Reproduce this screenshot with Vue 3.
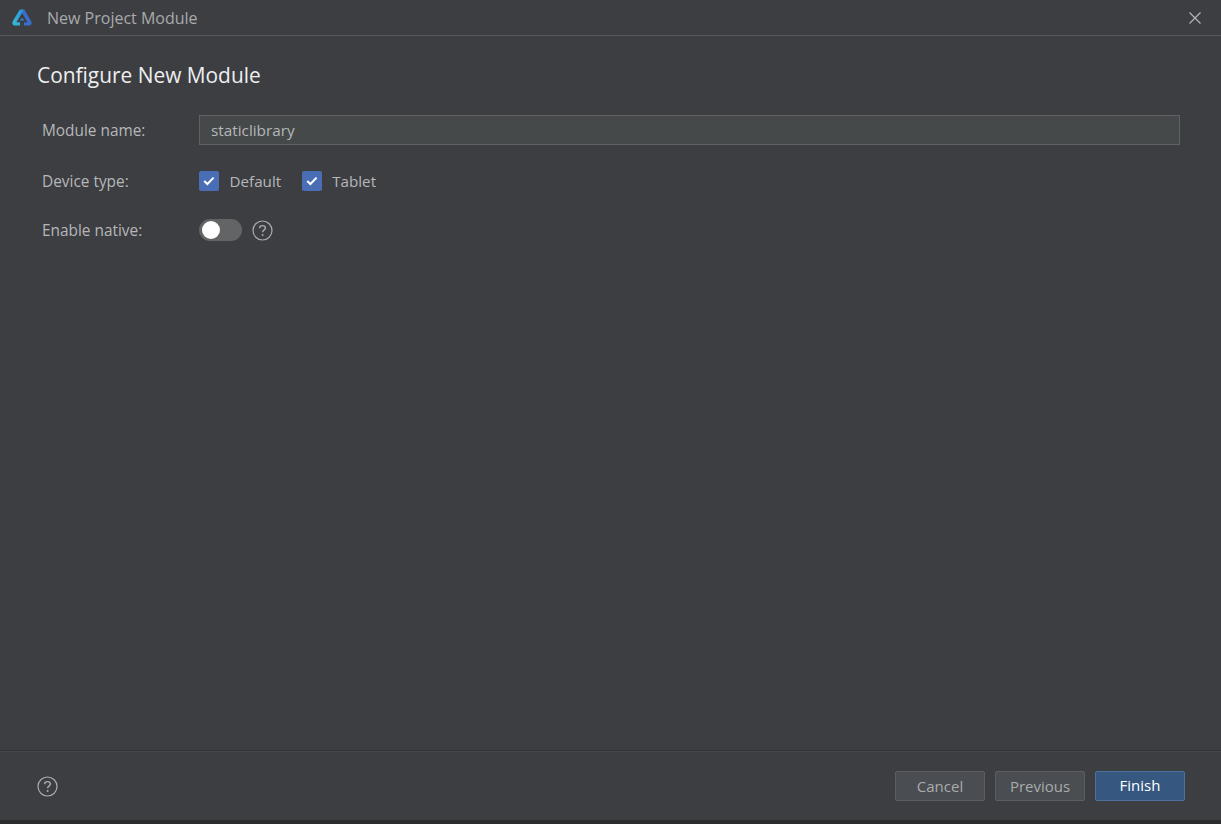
<template>
  <div class="dialog">
    <div class="title-bar">
      <svg class="logo" width="20" height="17" viewBox="0 0 20 17">
        <defs>
          <linearGradient id="logoLeft" x1="0" y1="1" x2="1" y2="0">
            <stop offset="0" stop-color="#38bcd6" />
            <stop offset="1" stop-color="#2a92dc" />
          </linearGradient>
        </defs>
        <path d="M9 0.5H11.2C12 0.5 12.6 0.9 13 1.5L19.3 12.6C20.3 14.4 19.2 16.5 17.2 16.5H12V13.2H15.6L10 4L9 0.5Z" fill="#3a6ccc" />
        <path d="M9.2 0.5C8.2 0.5 7.5 0.9 7 1.7L0.7 12.6C-0.3 14.4 0.8 16.5 2.8 16.5H8V13.2H4.4L10 4L11.4 0.5H9.2Z" fill="url(#logoLeft)" />
        <path d="M10 9L12.4 11.6H7.6L10 9Z" fill="#2f86d8" />
      </svg>
      <span class="title">New Project Module</span>
      <svg class="close" width="14" height="14" viewBox="0 0 14 14">
        <path d="M1.5 1.5L12.5 12.5M12.5 1.5L1.5 12.5" stroke="#b4b6b8" stroke-width="1.2" fill="none" />
      </svg>
    </div>

    <div class="body">
      <h1 class="heading">Configure New Module</h1>
      <div class="form">
        <div class="row">
          <label class="label">Module name:</label>
          <div class="input">staticlibrary</div>
        </div>
        <div class="row device-row">
          <label class="label">Device type:</label>
          <div class="checks">
            <div v-for="d in devices" :key="d" class="check-item">
              <span class="checkbox">
                <svg width="12" height="10" viewBox="0 0 12 10">
                  <path d="M1.2 5L4.4 8L10.6 1.6" stroke="#fff" stroke-width="2" fill="none" />
                </svg>
              </span>
              <span class="check-text">{{ d }}</span>
            </div>
          </div>
        </div>
        <div class="row">
          <label class="label">Enable native:</label>
          <div class="switch-wrap">
            <span class="switch"><span class="knob"></span></span>
            <svg class="help" width="21" height="21" viewBox="0 0 21 21">
              <circle cx="10.5" cy="10.5" r="9.5" stroke="#a9abad" stroke-width="1.2" fill="none" />
              <path d="M7.6 8.2C7.6 6.5 8.9 5.6 10.5 5.6C12.2 5.6 13.4 6.6 13.4 8C13.4 9.8 10.6 10 10.6 12.3" stroke="#a9abad" stroke-width="1.4" fill="none" />
              <circle cx="10.6" cy="15" r="1" fill="#a9abad" />
            </svg>
          </div>
        </div>
      </div>
    </div>

    <div class="footer">
      <svg class="help" width="21" height="21" viewBox="0 0 21 21">
        <circle cx="10.5" cy="10.5" r="9.5" stroke="#a9abad" stroke-width="1.2" fill="none" />
        <path d="M7.6 8.2C7.6 6.5 8.9 5.6 10.5 5.6C12.2 5.6 13.4 6.6 13.4 8C13.4 9.8 10.6 10 10.6 12.3" stroke="#a9abad" stroke-width="1.4" fill="none" />
        <circle cx="10.6" cy="15" r="1" fill="#a9abad" />
      </svg>
      <div class="buttons">
        <button class="btn">Cancel</button>
        <button class="btn">Previous</button>
        <button class="btn primary">Finish</button>
      </div>
    </div>
    <div class="edge"></div>
  </div>
</template>

<script setup>
const devices = ['Default', 'Tablet'];
</script>

<style scoped>
.dialog {
  width: 1221px;
  height: 824px;
  display: flex;
  flex-direction: column;
  background: #3d3e42;
  color: #b5b7b9;
  font-family: "Open Sans", "Noto Sans", sans-serif;
  font-size: 15px;
}

.title-bar {
  height: 35px;
  flex: none;
  display: flex;
  align-items: center;
  padding: 0 19px 0 12px;
  border-bottom: 1px solid #55575a;
}

.logo {
  flex: none;
}

.title {
  margin-left: 15px;
  font-size: 16px;
  color: #a8aaac;
}

.close {
  margin-left: auto;
}

.body {
  flex: 1;
  padding: 26px 41px 0 37px;
}

.heading {
  margin: 0;
  font-size: 20.9px;
  line-height: 27px;
  padding-bottom: 1px;
  font-weight: 400;
  color: #eeeff0;
}

.form {
  margin-top: 25px;
  padding-left: 5px;
  display: flex;
  flex-direction: column;
  gap: 19px;
  font-size: 15.4px;
}

.row {
  display: flex;
  align-items: center;
  min-height: 30px;
}

.device-row {
  margin-top: 2px;
}

.label {
  width: 157px;
  flex: none;
  color: #b5b7b9;
}

.input {
  flex: 1;
  height: 30px;
  box-sizing: border-box;
  padding: 0 11px;
  line-height: 28px;
  font-size: 15.3px;
  background: #45494a;
  border: 1px solid #5f6265;
  color: #b5b7b9;
}

.checks {
  display: flex;
  gap: 20.5px;
}

.check-item {
  display: flex;
  align-items: center;
  gap: 10.5px;
}

.check-text {
  font-size: 15.2px;
}

.checkbox {
  width: 20px;
  height: 20px;
  border-radius: 2px;
  background: #4a6eb5;
  display: flex;
  align-items: center;
  justify-content: center;
}

.switch-wrap {
  display: flex;
  align-items: center;
  gap: 10px;
}

.switch {
  width: 43px;
  height: 22px;
  border-radius: 11px;
  background: #636466;
  display: flex;
  align-items: center;
  padding-left: 3px;
  box-sizing: border-box;
}

.knob {
  width: 18px;
  height: 18px;
  border-radius: 50%;
  background: #fff;
}

.footer {
  height: 68px;
  padding: 1px 36px 0 37px;
  flex: none;
  display: flex;
  align-items: center;
  justify-content: space-between;
  border-top: 1px solid #2f3134;
  box-shadow: inset 0 1px 0 #45474a;
}

.buttons {
  display: flex;
  gap: 10px;
}

.btn {
  width: 90px;
  height: 30px;
  padding: 0;
  border: 1px solid #5a5d61;
  border-radius: 2px;
  background: #4a4d51;
  color: #a9abad;
  font: inherit;
}

.btn.primary {
  padding-bottom: 2px;
  background: #365880;
  border-color: #4c719c;
  color: #fff;
  font-weight: 500;
}

.edge {
  height: 4px;
  flex: none;
  background: #2a2c2e;
}
</style>

<style>
html, body {
  margin: 0;
  background: #3d3e42;
}
</style>
